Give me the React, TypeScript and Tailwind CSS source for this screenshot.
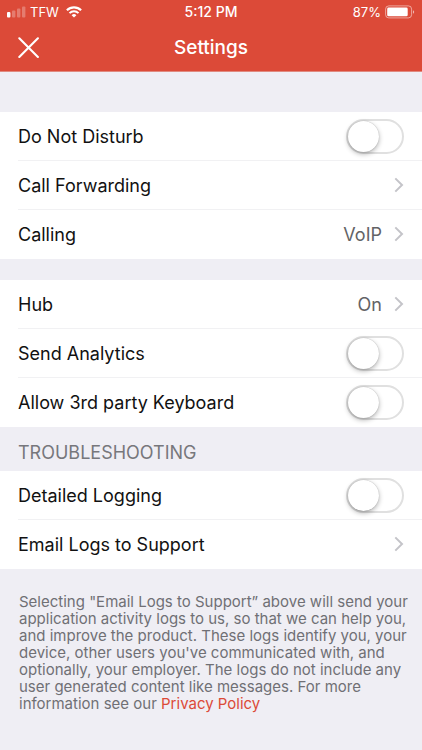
import { useState } from 'react';

function StatusBar() {
  return (
    <div className="grid h-6 grid-cols-3 items-center px-[7px] text-[13px] leading-4">
      <div className="flex items-center">
        <svg className="mr-1 h-3 w-[19px] shrink-0" viewBox="0 0 19 12" fill="currentColor" aria-hidden="true">
          <rect x="0" y="6" width="3.4" height="5.5" rx="1" />
          <rect x="5" y="4.5" width="3.4" height="7" rx="1" opacity="0.28" />
          <rect x="10" y="2.5" width="3.4" height="9" rx="1" opacity="0.28" />
          <rect x="15" y="0.5" width="3.4" height="11" rx="1" opacity="0.28" />
        </svg>
        <span>TFW</span>
        <svg className="ml-[7px] h-3 w-4 shrink-0" viewBox="0 0 16 12" fill="none" stroke="currentColor" aria-hidden="true">
          <path d="M0.9 4.3a10.2 10.2 0 0 1 14.2 0" strokeWidth="2.2" />
          <path d="M3.5 7.1a6.4 6.4 0 0 1 9 0" strokeWidth="2" />
          <path d="M8 11.6 5.6 9.2a3.4 3.4 0 0 1 4.8 0z" fill="currentColor" stroke="none" />
        </svg>
      </div>
      <div className="text-center text-sm leading-4 font-medium">5:12 PM</div>
      <div className="flex items-center justify-end">
        <span>87%</span>
        <svg className="ml-1 h-[14px] w-[30px] shrink-0" viewBox="0 0 30 14" aria-hidden="true">
          <rect x="0.6" y="0.9" width="26" height="12" rx="3.2" fill="none" stroke="#fff" strokeOpacity="0.5" />
          <rect x="2.2" y="2.5" width="20.5" height="8.8" rx="1.4" fill="#fff" />
          <path d="M28 5.2c1.6.5 1.6 3 0 3.5z" fill="#fff" fillOpacity="0.6" />
        </svg>
      </div>
    </div>
  );
}

function Header() {
  return (
    <header className="border-b border-[#e08a80] bg-[#dc4a38] text-white">
      <StatusBar />
      <div className="grid h-[47px] grid-cols-[48px_1fr_48px] items-center">
        <button type="button" aria-label="Close" className="flex h-full items-center pl-[18px]">
          <svg className="h-[22px] w-[22px]" viewBox="0 0 22 22" fill="none" stroke="currentColor" strokeWidth="2.1" strokeLinecap="round">
            <path d="M1.3 1.3l18.6 18.6M19.9 1.3 1.3 19.9" />
          </svg>
        </button>
        <h1 className="text-center text-[19px] font-medium leading-6">Settings</h1>
      </div>
    </header>
  );
}

function Chevron() {
  return (
    <svg className="ml-3 h-4 w-[10px] shrink-0" viewBox="0 0 10 16" fill="none" stroke="#c4c4c9" strokeWidth="2" aria-hidden="true">
      <path d="M1.3 1.4 8 8l-6.7 6.6" />
    </svg>
  );
}

const rowClass = 'flex h-12 w-full items-center justify-between pr-[18px] text-left';

function ToggleRow({ label }: { label: string }) {
  const [on, setOn] = useState(false);

  return (
    <label className={rowClass}>
      <span className="pt-px">{label}</span>
      <input
        type="checkbox"
        checked={on}
        onChange={(e) => setOn(e.target.checked)}
        className="h-[35px] w-[58px] shrink-0 appearance-none rounded-full border-2 border-[#e0e0e0] bg-white before:block before:size-[31px] before:rounded-full before:bg-white before:shadow-[0_2px_5px_rgba(0,0,0,0.3),0_0_1px_rgba(0,0,0,0.3)] before:transition-transform checked:border-[#4cd964] checked:bg-[#4cd964] checked:before:translate-x-[23px]"
      />
    </label>
  );
}

function LinkRow({ label, value }: { label: string; value?: string }) {
  return (
    <button type="button" className={rowClass}>
      <span className="pt-px">{label}</span>
      <span className="flex items-center text-[#636366]">
        {value && <span className="pt-px">{value}</span>}
        <Chevron />
      </span>
    </button>
  );
}

function Group({ children }: { children: React.ReactNode }) {
  return (
    <div className="bg-white pl-[18px] text-lg text-[#111] *:border-b *:border-[#f1f1f3] *:last:border-white">
      {children}
    </div>
  );
}

export default function App() {
  return (
    <div className="min-h-screen bg-[#efeef4] font-['Inter','Liberation_Sans',sans-serif]">
      <Header />
      <main>
        <div className="pt-10">
          <Group>
            <div><ToggleRow label="Do Not Disturb" /></div>
            <div><LinkRow label="Call Forwarding" /></div>
            <div><LinkRow label="Calling" value="VoIP" /></div>
          </Group>
        </div>

        <div className="pt-[21px]">
          <Group>
            <div><LinkRow label="Hub" value="On" /></div>
            <div><ToggleRow label="Send Analytics" /></div>
            <div><ToggleRow label="Allow 3rd party Keyboard" /></div>
          </Group>
        </div>

        <section>
          <h2 className="flex h-11 items-end px-[18px] pb-[6px] text-lg leading-6 text-[#77777c]">
            TROUBLESHOOTING
          </h2>
          <Group>
            <div><ToggleRow label="Detailed Logging" /></div>
            <div><LinkRow label="Email Logs to Support" /></div>
          </Group>
          <p className="pt-6 pr-2 pb-8 pl-[19px] text-[15px] leading-[17px] text-[#707075]">
            Selecting "Email Logs to Support” above will send your application activity logs to us, so that we can
            help you, and improve the product. These logs identify you, your device, other users you've communicated
            with, and optionally, your employer. The logs do not include any user generated content like messages.
            For more information see our{' '}
            <a href="#privacy" className="text-[#dc4a38]">Privacy Policy</a>
          </p>
        </section>
      </main>
    </div>
  );
}
